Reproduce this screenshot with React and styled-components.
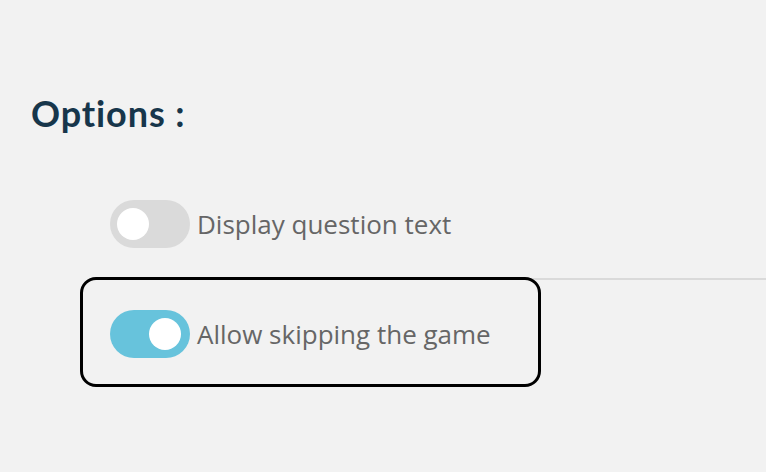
import React from "react";
import styled, { createGlobalStyle } from "styled-components";

const Global = createGlobalStyle`
  html, body { margin: 0; padding: 0; background: #f2f2f2; }
  body { font-family: "Open Sans", "Liberation Sans", sans-serif; }
`;

const Page = styled.div`
  min-height: 472px;
  background: #f2f2f2;
  padding-top: 88px;
  box-sizing: border-box;
  overflow: hidden;
`;

const Heading = styled.h2`
  margin: 0 0 0 31px;
  font-family: Lato, "Open Sans", sans-serif;
  font-weight: 700;
  font-size: 36px;
  line-height: 50px;
  color: #17364b;
  letter-spacing: 0.9px;
`;

const OptionsList = styled.div`
  margin-left: 80px;
  margin-top: 32px;
  display: flex;
  flex-direction: column;
  align-items: flex-start;
`;

const Row = styled.label`
  display: flex;
  align-items: center;
  gap: 7px;
  box-sizing: border-box;
  ${({ $focused }) =>
    $focused
      ? `
    width: 461px;
    height: 110px;
    margin-top: -3px;
    padding: 4px 0 0 27px;
    border: 3px solid #000;
    border-radius: 16px;
    position: relative;
  `
      : `
    width: calc(100vw - 96px);
    margin-left: 16px;
    padding: 30px 0 30px 14px;
    border-bottom: 2px solid #dadada;
  `}
`;

const Track = styled.span`
  display: flex;
  align-items: center;
  justify-content: ${({ $on }) => ($on ? "flex-end" : "flex-start")};
  width: 80px;
  height: 48px;
  padding: 0 9px 0 7px;
  box-sizing: border-box;
  border-radius: 24px;
  background: ${({ $on }) => ($on ? "#67c3dc" : "#dadada")};
  flex-shrink: 0;
`;

const Knob = styled.span`
  width: 32px;
  height: 32px;
  border-radius: 50%;
  background: #fff;
`;

const Label = styled.span`
  font-family: "Open Sans", sans-serif;
  font-size: 26px;
  color: #666;
  line-height: 34px;
`;

function Option({ on, focused, children }) {
  return (
    <Row $focused={focused}>
      <Track $on={on}>
        <Knob />
      </Track>
      <Label>{children}</Label>
    </Row>
  );
}

export default function App() {
  return (
    <>
      <Global />
      <Page>
        <Heading>Options :</Heading>
        <OptionsList>
          <Option on={false}>Display question text</Option>
          <Option on focused>
            Allow skipping the game
          </Option>
        </OptionsList>
      </Page>
    </>
  );
}
